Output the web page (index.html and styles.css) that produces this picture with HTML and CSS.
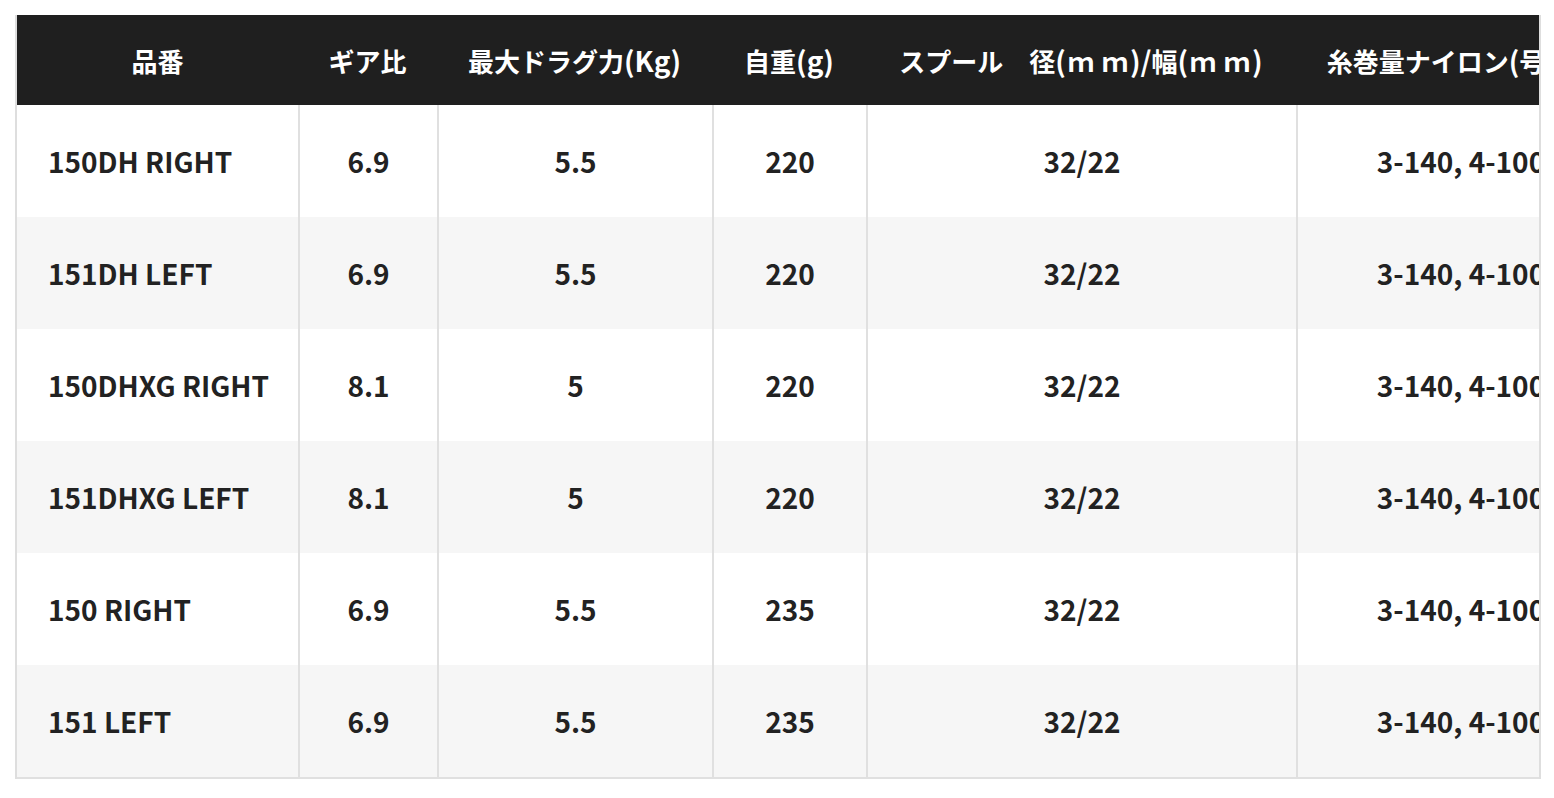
FILE: index.html
```html
<!DOCTYPE html>
<html lang="ja">
<head>
<meta charset="utf-8">
<title>スペック</title>
<link rel="stylesheet" href="styles.css">
</head>
<body>
<div class="spec-wrap">
  <table class="spec">
    <thead>
      <tr>
        <th class="c1">品番</th>
        <th class="c2">ギア比</th>
        <th class="c3">最大ドラグ力<span class="lat">(Kg)</span></th>
        <th class="c4">自重<span class="lat">(g)</span></th>
        <th class="c5">スプール　径<span class="lat">(</span><span class="mm"><span class="m1">ｍ</span>ｍ</span><span class="lat">)/</span>幅<span class="lat">(</span><span class="mm"><span class="m1">ｍ</span>ｍ</span><span class="lat">)</span></th>
        <th class="c6">糸巻量ナイロン<span class="lat">(</span>号<span class="lat">-m)</span></th>
      </tr>
    </thead>
    <tbody>
      <tr><td class="name">150DH RIGHT</td><td>6.9</td><td>5.5</td><td>220</td><td>32/22</td><td>3-140, 4-100</td></tr>
      <tr><td class="name">151DH LEFT</td><td>6.9</td><td>5.5</td><td>220</td><td>32/22</td><td>3-140, 4-100</td></tr>
      <tr><td class="name">150DHXG RIGHT</td><td>8.1</td><td>5</td><td>220</td><td>32/22</td><td>3-140, 4-100</td></tr>
      <tr><td class="name">151DHXG LEFT</td><td>8.1</td><td>5</td><td>220</td><td>32/22</td><td>3-140, 4-100</td></tr>
      <tr><td class="name">150 RIGHT</td><td>6.9</td><td>5.5</td><td>235</td><td>32/22</td><td>3-140, 4-100</td></tr>
      <tr><td class="name">151 LEFT</td><td>6.9</td><td>5.5</td><td>235</td><td>32/22</td><td>3-140, 4-100</td></tr>
    </tbody>
  </table>
</div>
</body>
</html>
```

FILE: styles.css
```css
* { box-sizing: border-box; }
html, body { margin: 0; padding: 0; background: #fff; }
body {
  font-family: "Noto Sans CJK JP", "Noto Sans", sans-serif;
  color: #222;
}
.spec-wrap {
  margin: 15px 0 0 15px;
  width: 1526px;
  border-left: 2px solid #dedede;
  border-right: 2px solid #dedede;
  overflow: hidden;
}
.spec {
  table-layout: fixed;
  border-collapse: separate;
  border-spacing: 0;
  width: 1607px;
  font-size: 28px;
  font-weight: 700;
  border-bottom: 2px solid #e0e0e0;
}
.spec th {
  background: #1f1f1f;
  color: #fff;
  height: 90px;
  padding: 0;
  font-size: 26px;
  font-weight: 700;
  text-align: center;
  white-space: nowrap;
  vertical-align: middle;
}
.spec th .lat { font-size: 28px; }
.spec th .mm { padding: 0 2px; }
.spec th .m1 { letter-spacing: 8px; }
.spec .c1 { width: 281px; }
.spec .c2 { width: 139px; }
.spec .c3 { width: 275px; }
.spec .c4 { width: 154px; }
.spec .c5 { width: 430px; }
.spec .c6 { width: 328px; }
.spec td {
  height: 112px;
  padding: 0;
  text-align: center;
  vertical-align: middle;
  white-space: nowrap;
  border-left: 2px solid #e0e0e0;
}
.spec td.name {
  border-left: 0;
  text-align: left;
  padding-left: 31px;
}
.spec tbody tr:nth-child(even) td { background: #f6f6f6; }
```
